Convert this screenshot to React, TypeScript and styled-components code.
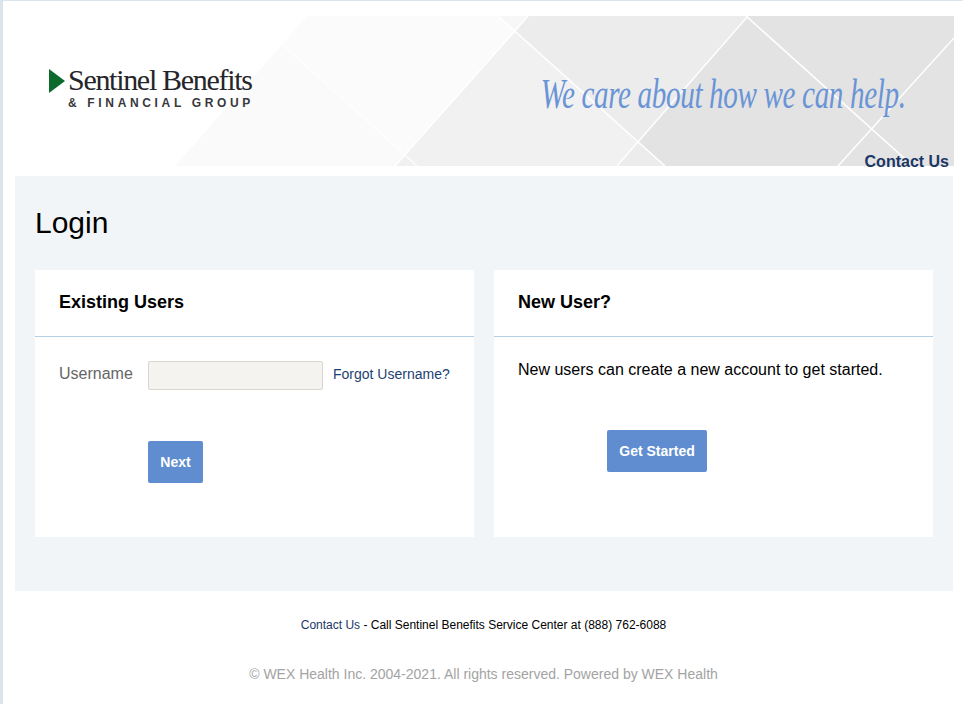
import styled, { createGlobalStyle } from "styled-components";

const GlobalStyle = createGlobalStyle`
  html, body {
    margin: 0;
    padding: 0;
    background: #fff;
    font-family: "Liberation Sans", Arial, sans-serif;
  }
`;

export default function App() {
  return (
    <>
      <GlobalStyle />
      <Page>
        <Banner>
          <BannerArt viewBox="0 0 951 150" preserveAspectRatio="none" aria-hidden="true">
            {/* page coordinates minus (3, 16) */}
            <polygon points="304,0 525,0 392,150 172,150" fill="#fbfbfb" />
            <polygon points="280,29 402,139 414,150 172,150" fill="#fafafa" />
            <polygon points="495,0 525,0 512,16" fill="#f7f7f7" />
            <polygon points="512,16 634,126 614,150 392,150" fill="#f1f1f1" />
            <polygon points="525,0 745,0 634,126 512,16" fill="#ececec" />
            <polygon points="614,150 634,126 662,150" fill="#ececec" />
            <polygon points="745,0 951,0 951,150 662,150 634,126" fill="#e3e3e3" />
            <g stroke="#fff" fill="none">
              <line x1="280" y1="29" x2="414" y2="150" strokeWidth="1.2" />
              <line x1="525" y1="0" x2="392" y2="150" strokeWidth="1.5" />
              <line x1="495" y1="0" x2="662" y2="150" strokeWidth="1.5" />
              <line x1="614" y1="150" x2="745" y2="0" strokeWidth="1.5" />
              <line x1="743" y1="0" x2="910" y2="150" strokeWidth="1.5" />
              <line x1="835" y1="150" x2="951" y2="22" strokeWidth="1.5" />
            </g>
          </BannerArt>
          <Logo>
            <LogoMark viewBox="0 0 16 24" aria-hidden="true">
              <polygon points="0,0 16,12 0,24" fill="#0b6a2c" />
            </LogoMark>
            <LogoText>
              <LogoName>Sentinel Benefits</LogoName>
              <LogoSub>&amp; FINANCIAL GROUP</LogoSub>
            </LogoText>
          </Logo>
          <Tagline>We care about how we can help.</Tagline>
          <HeaderLink href="#">Contact Us</HeaderLink>
        </Banner>

        <Panel>
          <Title>Login</Title>
          <Cards>
            <Card>
              <CardHead>Existing Users</CardHead>
              <CardBody>
                <FieldRow>
                  <Label htmlFor="username">Username</Label>
                  <Input id="username" type="text" />
                  <Forgot href="#">Forgot Username?</Forgot>
                </FieldRow>
                <ButtonRow $indent={89} $top={51}>
                  <Button $width={55}>Next</Button>
                </ButtonRow>
              </CardBody>
            </Card>
            <Card>
              <CardHead>New User?</CardHead>
              <CardBody>
                <Intro>New users can create a new account to get started.</Intro>
                <ButtonRow $indent={89} $top={51}>
                  <Button $width={100}>Get Started</Button>
                </ButtonRow>
              </CardBody>
            </Card>
          </Cards>
        </Panel>

        <Footer>
          <ContactLine>
            <FooterLink href="#">Contact Us</FooterLink> - Call Sentinel Benefits Service Center at (888) 762-6088
          </ContactLine>
          <Copyright>© WEX Health Inc. 2004-2021. All rights reserved. Powered by WEX Health</Copyright>
        </Footer>
      </Page>
    </>
  );
}

const Page = styled.div`
  box-sizing: border-box;
  height: 704px;
  overflow: hidden;
  border-left: 3px solid #d9e4ec;
  border-top: 1px solid #d9e4ec;
  padding-top: 15px;
`;

const Banner = styled.header`
  position: relative;
  width: 951px;
  height: 150px;
  display: flex;
  align-items: flex-start;
  justify-content: space-between;
`;

const BannerArt = styled.svg`
  position: absolute;
  inset: 0;
  width: 100%;
  height: 100%;
`;

const Logo = styled.div`
  position: relative;
  display: flex;
  align-items: flex-start;
  gap: 3px;
  margin: 53px 0 0 46px;
`;

const LogoMark = styled.svg`
  width: 16px;
  height: 24px;
  flex: none;
`;

const LogoText = styled.div`
  display: flex;
  flex-direction: column;
  margin-top: -2px;
`;

const LogoName = styled.div`
  font-family: "Liberation Serif", serif;
  font-size: 30px;
  line-height: 25px;
  letter-spacing: -1.3px;
  color: #26252a;
  white-space: nowrap;
`;

const LogoSub = styled.div`
  font-family: "Liberation Sans", sans-serif;
  font-size: 12px;
  line-height: 14px;
  font-weight: 700;
  letter-spacing: 3.66px;
  margin-top: 4px;
  color: #38383d;
  white-space: nowrap;
`;

const Tagline = styled.div`
  position: relative;
  margin: 48px 48px 0 0;
  font-family: "Liberation Serif", serif;
  font-style: italic;
  font-size: 42px;
  line-height: 60px;
  letter-spacing: -0.5px;
  color: #6a94d6;
  white-space: nowrap;
  transform: scaleX(0.693);
  transform-origin: right center;
`;

const HeaderLink = styled.a`
  position: absolute;
  right: 5px;
  bottom: -5px;
  font-size: 16px;
  line-height: 18px;
  font-weight: 700;
  color: #1b3766;
  text-decoration: none;
`;

const Panel = styled.main`
  box-sizing: border-box;
  width: 938px;
  height: 415px;
  margin: 10px 0 0 12px;
  padding: 0 20px;
  background: #f2f5f8;
`;

const Title = styled.h1`
  margin: 0;
  padding: 29px 0 30px;
  font-size: 30px;
  line-height: 35px;
  font-weight: 400;
  color: #000;
`;

const Cards = styled.div`
  display: grid;
  grid-template-columns: 439px 439px;
  gap: 20px;
`;

const Card = styled.section`
  height: 267px;
  background: #fff;
`;

const CardHead = styled.h2`
  box-sizing: border-box;
  height: 67px;
  margin: 0;
  padding: 0 24px;
  font-size: 18px;
  line-height: 64px;
  font-weight: 700;
  color: #000;
  border-bottom: 1px solid #b5d0e6;
`;

const CardBody = styled.div`
  padding: 24px 24px 0;
`;

const FieldRow = styled.div`
  display: flex;
  align-items: center;
  height: 29px;
`;

const Label = styled.label`
  width: 89px;
  flex: none;
  font-size: 16px;
  color: #666;
  margin-bottom: 4px;
`;

const Input = styled.input`
  box-sizing: border-box;
  width: 175px;
  height: 29px;
  flex: none;
  padding: 0 6px;
  background: #f4f3ef;
  border: 1px solid #d8d6cf;
  border-radius: 2px;
  outline: none;
`;

const Forgot = styled.a`
  margin: 0 0 4px 10px;
  font-size: 14px;
  color: #1d3f72;
  text-decoration: none;
  white-space: nowrap;
`;

const ButtonRow = styled.div<{ $indent: number; $top: number }>`
  padding-left: ${(p) => p.$indent}px;
  margin-top: ${(p) => p.$top}px;
`;

const Button = styled.button<{ $width: number }>`
  display: block;
  width: ${(p) => p.$width}px;
  height: 42px;
  padding: 0;
  background: #5f8dd0;
  border: none;
  border-radius: 2px;
  font-family: inherit;
  font-size: 14px;
  font-weight: 700;
  color: #fff;
`;

const Intro = styled.p`
  margin: 0;
  font-size: 16px;
  line-height: 18px;
  color: #000;
`;

const Footer = styled.footer`
  width: 961px;
  text-align: center;
`;

const ContactLine = styled.div`
  margin-top: 27px;
  font-size: 12px;
  line-height: 14px;
  color: #000;
`;

const FooterLink = styled.a`
  color: #1b3766;
  text-decoration: none;
`;

const Copyright = styled.div`
  margin-top: 34px;
  font-size: 14px;
  line-height: 16px;
  color: #a3a3a3;
`;
